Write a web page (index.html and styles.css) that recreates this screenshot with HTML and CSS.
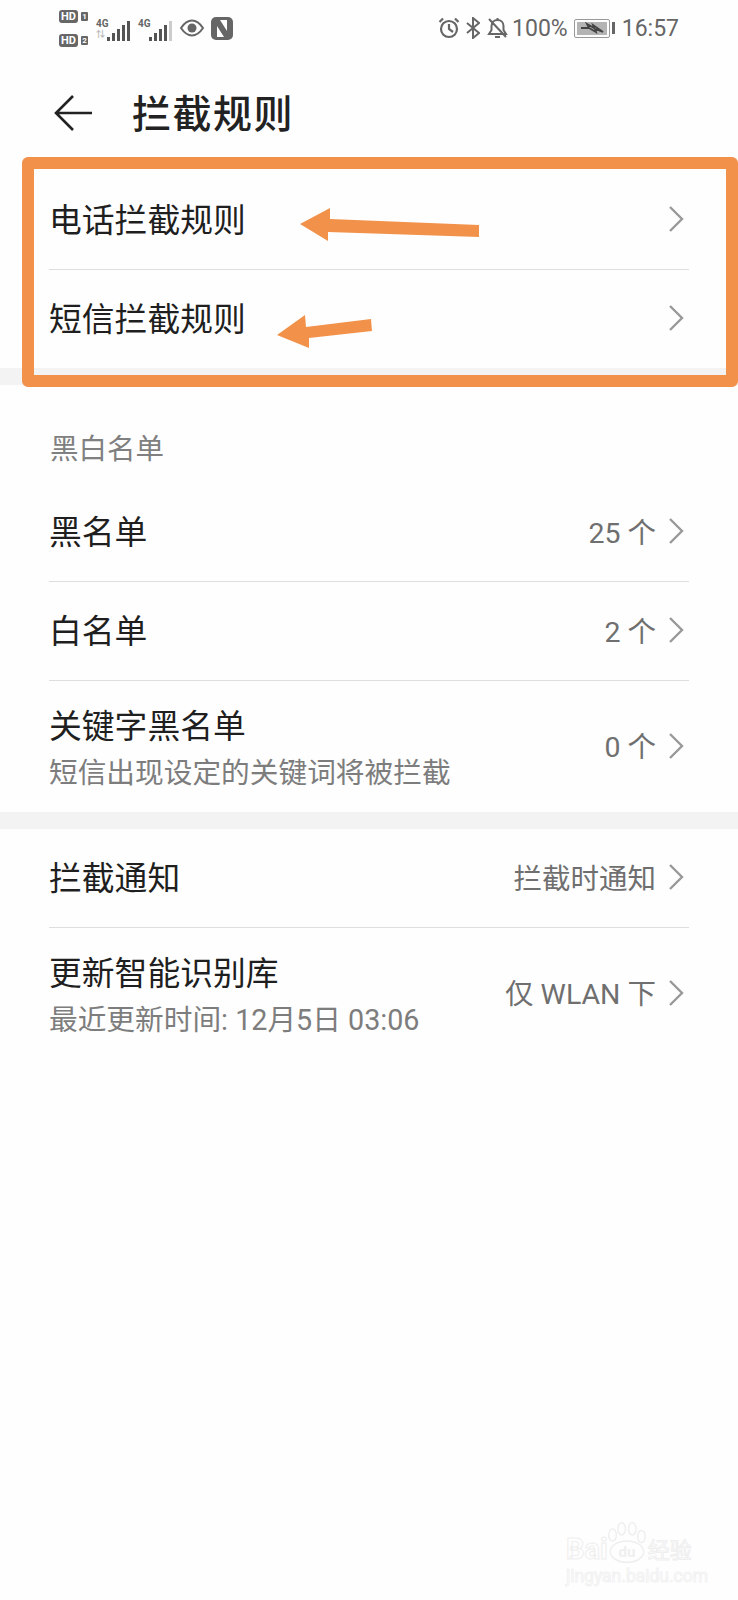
FILE: index.html
```html
<!DOCTYPE html>
<html lang="zh-CN">
<head>
    <meta charset="utf-8">
    <title>拦截规则</title>
    <link rel="stylesheet" href="styles.css">
</head>

<body>
    <div class="page">
        <!-- Status bar -->
        <div class="status-bar">
            <div class="status-left">
                <div class="sim-col">
                    <div class="sim"><span class="hd">HD</span><span class="sim-num">1</span></div>
                    <div class="sim"><span class="hd">HD</span><span class="sim-num">2</span></div>
                </div>
                <div class="signal">
                    <span class="net">4G<span class="net-arrows">⇅</span></span>
                    <svg width="24" height="22" viewBox="0 0 24 22">
                        <rect x="0" y="17" width="3" height="4" fill="#555"/>
                        <rect x="5" y="13" width="3" height="8" fill="#555"/>
                        <rect x="10" y="9" width="3" height="12" fill="#555"/>
                        <rect x="15" y="5" width="3" height="16" fill="#555"/>
                        <rect x="20" y="1" width="3" height="20" fill="#555"/>
                    </svg>
                </div>
                <div class="signal">
                    <span class="net">4G</span>
                    <svg width="24" height="22" viewBox="0 0 24 22">
                        <rect x="0" y="17" width="3" height="4" fill="#555"/>
                        <rect x="5" y="13" width="3" height="8" fill="#555"/>
                        <rect x="10" y="9" width="3" height="12" fill="#555"/>
                        <rect x="15" y="5" width="3" height="16" fill="#555"/>
                        <rect x="20" y="1" width="3" height="20" fill="#ccc"/>
                    </svg>
                </div>
                <svg class="eye" width="24" height="18" viewBox="0 0 24 18">
                    <path d="M1 9C5 3 9 1.500 12 1.500S19 3 23 9C19 15 15 16.500 12 16.500S5 15 1 9Z" fill="none" stroke="#666" stroke-width="2"/>
                    <circle cx="12" cy="9" r="4.500" fill="#666"/>
                </svg>
                <svg width="22" height="23" viewBox="0 0 22 23">
                    <rect x="0" y="0" width="22" height="23" rx="5" fill="#666"/>
                    <polygon points="6,9 6,20 13,20" fill="#fff"/>
                    <polygon points="16,14 16,3 9,3" fill="#fff"/>
                </svg>
            </div>
            <div class="status-right">
                <svg width="22" height="22" viewBox="0 0 22 22">
                    <circle cx="11" cy="12" r="8" fill="none" stroke="#666" stroke-width="2.200"/>
                    <path d="M11 7V12L15 15M1.500 5L5 1.500M20.500 5L17 1.500" fill="none" stroke="#666" stroke-width="2.200"/>
                </svg>
                <svg class="bt" width="14" height="22" viewBox="0 0 14 22">
                    <path d="M1 6L13 16L7 21V1L13 6L1 16" fill="none" stroke="#666" stroke-width="2"/>
                </svg>
                <svg class="bell" width="21" height="22" viewBox="0 0 21 22">
                    <path d="M2 17H19L16.500 13V9C16.500 5.500 14 3 10.500 3S4.500 5.500 4.500 9V13ZM8 20H13M10.500 1V3M2 2L19 20" fill="none" stroke="#666" stroke-width="2"/>
                </svg>
                <span class="battery-text">100%</span>
                <div class="battery"><div class="battery-fill">
                    <svg width="24" height="12" viewBox="0 0 24 12">
                        <path d="M1 6H9L7 2L14 6L13 3L23 10L15 7L16 10L9 6" fill="none" stroke="#444" stroke-width="1.800"/>
                    </svg>
                </div></div>
                <span class="battery-cap"></span>
                <span class="clock">16:57</span>
            </div>
        </div>

        <!-- Header -->
        <div class="header">
            <svg class="back" width="38" height="36" viewBox="0 0 38 36">
                <path d="M19 1L2 18L19 35M2 18H38" fill="none" stroke="#222" stroke-width="2.600"/>
            </svg>
            <h1 class="title">拦截规则</h1>
        </div>

        <!-- Rule rows -->
        <ul class="list">
            <li class="row">
                <span class="row-title">电话拦截规则</span>
                <svg class="chev" width="16" height="26" viewBox="0 0 16 26"><path d="M2 1L14 13L2 25" fill="none" stroke="#999" stroke-width="2.400"/></svg>
            </li>
            <li class="row">
                <span class="row-title">短信拦截规则</span>
                <svg class="chev" width="16" height="26" viewBox="0 0 16 26"><path d="M2 1L14 13L2 25" fill="none" stroke="#999" stroke-width="2.400"/></svg>
            </li>
        </ul>
        <div class="gap"></div>

        <h2 class="section">黑白名单</h2>
        <ul class="list">
            <li class="row">
                <span class="row-title">黑名单</span>
                <span class="row-value">25 个</span>
                <svg class="chev" width="16" height="26" viewBox="0 0 16 26"><path d="M2 1L14 13L2 25" fill="none" stroke="#999" stroke-width="2.400"/></svg>
            </li>
            <li class="row">
                <span class="row-title">白名单</span>
                <span class="row-value">2 个</span>
                <svg class="chev" width="16" height="26" viewBox="0 0 16 26"><path d="M2 1L14 13L2 25" fill="none" stroke="#999" stroke-width="2.400"/></svg>
            </li>
            <li class="row row-tall">
                <div class="row-text">
                    <span class="row-title">关键字黑名单</span>
                    <span class="row-sub">短信出现设定的关键词将被拦截</span>
                </div>
                <span class="row-value">0 个</span>
                <svg class="chev" width="16" height="26" viewBox="0 0 16 26"><path d="M2 1L14 13L2 25" fill="none" stroke="#999" stroke-width="2.400"/></svg>
            </li>
        </ul>
        <div class="gap"></div>

        <ul class="list">
            <li class="row">
                <span class="row-title">拦截通知</span>
                <span class="row-value">拦截时通知</span>
                <svg class="chev" width="16" height="26" viewBox="0 0 16 26"><path d="M2 1L14 13L2 25" fill="none" stroke="#999" stroke-width="2.400"/></svg>
            </li>
            <li class="row row-tall">
                <div class="row-text">
                    <span class="row-title">更新智能识别库</span>
                    <span class="row-sub">最近更新时间: 12月5日 03:06</span>
                </div>
                <span class="row-value">仅 WLAN 下</span>
                <svg class="chev" width="16" height="26" viewBox="0 0 16 26"><path d="M2 1L14 13L2 25" fill="none" stroke="#999" stroke-width="2.400"/></svg>
            </li>
        </ul>

        <!-- Orange marks drawn over the screenshot -->
        <div class="mark-box"></div>
        <svg class="mark-arrows" width="738" height="400" viewBox="0 0 738 400">
            <polygon points="300,224 330,208 330,219 479,225 479,237 328,232 328,241" fill="#f2924a"/>
            <polygon points="277,335 305,315 306,327 371,319 372,331 309,338 309,348" fill="#f2924a"/>
        </svg>

        <!-- Watermark -->
        <div class="watermark">
            <div class="wm-top">
                <span class="wm-bai">Bai</span>
                <svg width="38" height="42" viewBox="0 0 50 55">
                    <g fill="none" stroke="#efefef" stroke-width="2">
                        <ellipse cx="25" cy="39" rx="22" ry="14"/>
                        <ellipse cx="6" cy="17" rx="5" ry="8"/>
                        <ellipse cx="18" cy="9" rx="5" ry="8"/>
                        <ellipse cx="32" cy="9" rx="5" ry="8"/>
                        <ellipse cx="44" cy="19" rx="5" ry="8"/>
                    </g>
                    <text x="25" y="46" text-anchor="middle" class="wm-du">du</text>
                </svg>
                <span class="wm-cn">经验</span>
            </div>
            <div class="wm-url">jingyan.baidu.com</div>
        </div>
    </div>
</body>
</html>
```

FILE: styles.css
```css
/* General Styles */
body {
    margin: 0;
    background-color: #fefefe;
    font-family: Roboto, "Noto Sans CJK SC", sans-serif;
    color: #1f1f1f;
}

.page {
    position: relative;
    width: 738px;
    height: 1600px;
    overflow: hidden;
}

/* Status Bar */
.status-bar {
    height: 56px;
    box-sizing: border-box;
    padding: 10px 59px 0 59px;
    display: flex;
    justify-content: space-between;
    align-items: flex-start;
    color: #666;
}

.status-left {
    display: flex;
    align-items: center;
    height: 36px;
    gap: 7px;
}

.sim-col {
    display: flex;
    flex-direction: column;
    gap: 11px;
    margin-right: 1px;
}

.sim {
    display: flex;
    align-items: center;
    gap: 3px;
    height: 13px;
}

.hd {
    width: 19px;
    height: 13px;
    background-color: #666;
    color: #fff;
    border-radius: 3px;
    font-size: 11px;
    font-weight: 700;
    line-height: 13px;
    text-align: center;
}

.sim-num {
    width: 7px;
    height: 9px;
    background-color: #666;
    color: #fff;
    border-radius: 1px;
    font-size: 8px;
    font-weight: 700;
    line-height: 9px;
    text-align: center;
}

.signal {
    display: flex;
    align-items: flex-end;
    height: 24px;
    margin-top: 4px;
}

.net {
    align-self: flex-start;
    font-size: 10px;
    font-weight: 700;
    line-height: 11px;
    width: 11px;
}

.net-arrows {
    display: block;
    font-size: 9px;
    line-height: 10px;
    color: #bbb;
}

.status-right {
    display: flex;
    align-items: center;
    height: 36px;
}

.bt {
    margin-left: 6px;
}

.bell {
    margin-left: 7px;
}

.battery-text {
    margin-left: 4px;
    font-size: 23px;
}

.battery {
    margin-left: 6px;
    width: 36px;
    height: 19px;
    box-sizing: border-box;
    border: 1px solid #999;
    border-radius: 2px;
    padding: 2px;
}

.battery-fill {
    height: 100%;
    background-color: #b4b4b4;
    display: flex;
    align-items: center;
    justify-content: center;
}

.battery-cap {
    width: 3px;
    height: 12px;
    margin-left: 2px;
    background-color: #666;
}

.clock {
    margin-left: 7px;
    font-size: 23px;
}

/* Header */
.header {
    height: 115px;
    box-sizing: border-box;
    padding: 0 0 4px 54px;
    display: flex;
    align-items: center;
    gap: 40px;
}

.back {
    margin-top: 2px;
}

.title {
    margin: 0 0 2px;
    font-size: 39px;
    font-weight: 500;
    letter-spacing: 1.500px;
    color: #222;
}

/* List Rows */
.list {
    list-style: none;
    margin: 0;
    padding: 0 49px;
}

.row {
    min-height: 98px;
    display: flex;
    align-items: center;
    border-bottom: 1px solid #dedede;
}

.row:last-child {
    border-bottom: none;
}

.row-tall {
    min-height: 131px;
}

.row-text {
    display: flex;
    flex-direction: column;
    gap: 3px;
    padding-top: 4px;
}

.row-title {
    font-size: 32.800px;
    line-height: 46px;
    padding-top: 2px;
}

.row-text .row-title {
    padding-top: 0;
}

.row-sub {
    font-size: 28.700px;
    line-height: 40px;
    color: #7d7d7d;
}

.row-value {
    margin-left: auto;
    margin-right: 12px;
    margin-bottom: 4px;
    font-size: 28.500px;
    color: #6f6f6f;
}

.chev {
    flex-shrink: 0;
    margin-right: 5px;
    margin-bottom: 2px;
}

.row > .row-title + .chev {
    margin-left: auto;
}

.gap {
    height: 17px;
    background-color: #f3f3f3;
}

.section {
    margin: 0;
    height: 98px;
    box-sizing: border-box;
    padding: 45px 0 0 50px;
    font-size: 28.500px;
    font-weight: 400;
    line-height: 40px;
    color: #808080;
}

/* Annotations */
.mark-box {
    position: absolute;
    left: 22px;
    top: 157px;
    width: 716px;
    height: 230px;
    box-sizing: border-box;
    border: 12px solid #f2924a;
    border-radius: 6px;
}

.mark-arrows {
    position: absolute;
    left: 0;
    top: 0;
}

/* Watermark */
.watermark {
    position: absolute;
    left: 566px;
    top: 1518px;
    color: transparent;
}

.wm-top {
    display: flex;
    align-items: flex-end;
    height: 46px;
}

.wm-bai {
    font-size: 29px;
    font-weight: 700;
    line-height: 30px;
    -webkit-text-stroke: 1px #efefef;
}

.wm-du {
    font-size: 20px;
    font-weight: 700;
    fill: #efefef;
}

.wm-cn {
    font-size: 22px;
    line-height: 26px;
    margin-left: 2px;
    -webkit-text-stroke: 1px #efefef;
}

.wm-url {
    font-size: 17.500px;
    line-height: 20px;
    margin-top: 2px;
    -webkit-text-stroke: 1px #f2f2f2;
}
```
